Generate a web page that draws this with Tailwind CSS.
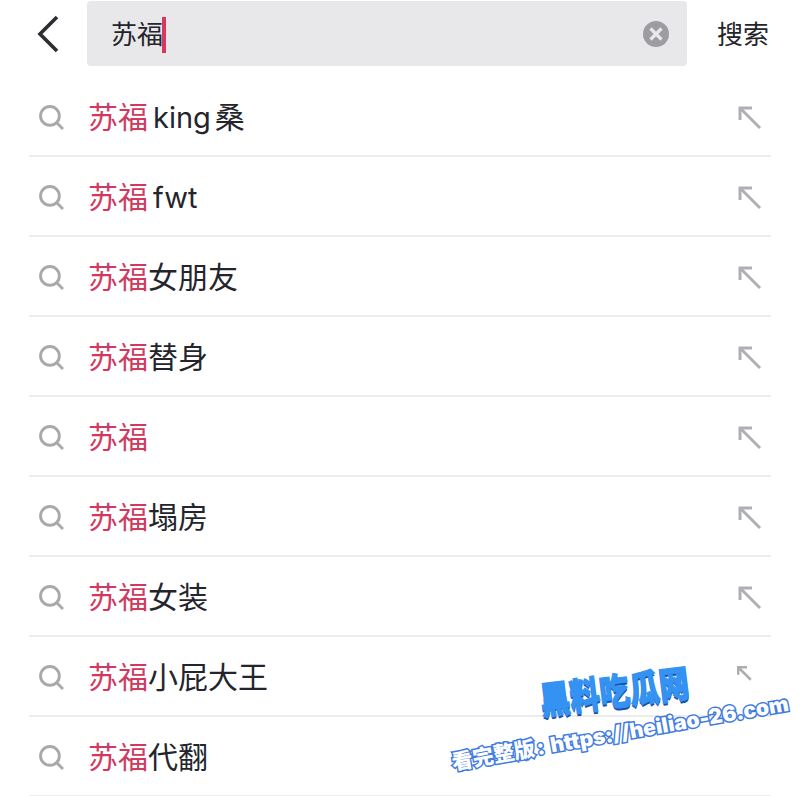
<!DOCTYPE html>
<html lang="zh-CN">
<head>
    <meta charset="UTF-8">
    <title>搜索</title>
    <script src="https://cdn.jsdelivr.net/npm/@tailwindcss/browser@4"></script>
</head>
<body class="bg-white w-[800px] h-[796px] overflow-hidden relative font-['Inter','Noto_Sans_CJK_SC',sans-serif] text-[#24252c]">

    <!-- Search header -->
    <div class="flex items-center h-[67px]">
        <div class="w-[87px] flex justify-center pl-[9px]">
            <svg width="24" height="38" viewBox="0 0 24 38" fill="none" stroke="#2c2d33" stroke-width="3.6"><path d="M21 2 L4 19 L21 36"/></svg>
        </div>
        <div class="w-[600px] h-[65px] bg-[#e8e8eb] rounded-[4px] flex items-center pl-[24px] pr-[18px]">
            <span class="text-[26px] leading-none pt-[2px]">苏福</span>
            <span class="w-[4px] h-[36px] bg-[#d8375f] mt-[3px] ml-[-1px] shrink-0"></span>
            <svg class="ml-auto mt-[1px]" width="26" height="26" viewBox="0 0 26 26"><circle cx="13" cy="13" r="13" fill="#9c9ca2"/><path d="M7.5 7.5 L18.5 18.5 M18.5 7.5 L7.5 18.5" stroke="#e8e8eb" stroke-width="3.2"/></svg>
        </div>
        <span class="ml-[30px] text-[26px] leading-none pt-[2px]">搜索</span>
    </div>

    <!-- Suggestions -->
    <div class="mx-[29px] w-[742px] mt-[10px]">
        <div class="flex items-center h-[80px] border-b-2 border-[#ececee]">
            <svg class="w-[25px] h-[25px] ml-[10px] mt-[2px]" viewBox="0 0 24 24" fill="none" stroke="#a9a9ac" stroke-width="2.8"><circle cx="10.5" cy="10.5" r="9"/><path d="M17 17 L23 23"/></svg>
            <span class="ml-[24px] text-[30px] leading-none pt-[2px]"><span class="text-[#cf3a60]">苏福</span><span class="ml-[5px] mr-[4px] text-[29px]">king</span>桑</span>
            <svg class="ml-auto mr-[9px] w-[24px] h-[24px] mt-[4px]" viewBox="0 0 24 24" fill="none" stroke="#b0b0b4" stroke-width="3"><path d="M2 14 V2 H14 M2 2 L22 22"/></svg>
        </div>
        <div class="flex items-center h-[80px] border-b-2 border-[#ececee]">
            <svg class="w-[25px] h-[25px] ml-[10px] mt-[2px]" viewBox="0 0 24 24" fill="none" stroke="#a9a9ac" stroke-width="2.8"><circle cx="10.5" cy="10.5" r="9"/><path d="M17 17 L23 23"/></svg>
            <span class="ml-[24px] text-[30px] leading-none pt-[2px]"><span class="text-[#cf3a60]">苏福</span><span class="ml-[5px] text-[29px]">fwt</span></span>
            <svg class="ml-auto mr-[9px] w-[24px] h-[24px] mt-[4px]" viewBox="0 0 24 24" fill="none" stroke="#b0b0b4" stroke-width="3"><path d="M2 14 V2 H14 M2 2 L22 22"/></svg>
        </div>
        <div class="flex items-center h-[80px] border-b-2 border-[#ececee]">
            <svg class="w-[25px] h-[25px] ml-[10px] mt-[2px]" viewBox="0 0 24 24" fill="none" stroke="#a9a9ac" stroke-width="2.8"><circle cx="10.5" cy="10.5" r="9"/><path d="M17 17 L23 23"/></svg>
            <span class="ml-[24px] text-[30px] leading-none pt-[2px]"><span class="text-[#cf3a60]">苏福</span>女朋友</span>
            <svg class="ml-auto mr-[9px] w-[24px] h-[24px] mt-[4px]" viewBox="0 0 24 24" fill="none" stroke="#b0b0b4" stroke-width="3"><path d="M2 14 V2 H14 M2 2 L22 22"/></svg>
        </div>
        <div class="flex items-center h-[80px] border-b-2 border-[#ececee]">
            <svg class="w-[25px] h-[25px] ml-[10px] mt-[2px]" viewBox="0 0 24 24" fill="none" stroke="#a9a9ac" stroke-width="2.8"><circle cx="10.5" cy="10.5" r="9"/><path d="M17 17 L23 23"/></svg>
            <span class="ml-[24px] text-[30px] leading-none pt-[2px]"><span class="text-[#cf3a60]">苏福</span>替身</span>
            <svg class="ml-auto mr-[9px] w-[24px] h-[24px] mt-[4px]" viewBox="0 0 24 24" fill="none" stroke="#b0b0b4" stroke-width="3"><path d="M2 14 V2 H14 M2 2 L22 22"/></svg>
        </div>
        <div class="flex items-center h-[80px] border-b-2 border-[#ececee]">
            <svg class="w-[25px] h-[25px] ml-[10px] mt-[2px]" viewBox="0 0 24 24" fill="none" stroke="#a9a9ac" stroke-width="2.8"><circle cx="10.5" cy="10.5" r="9"/><path d="M17 17 L23 23"/></svg>
            <span class="ml-[24px] text-[30px] leading-none pt-[2px]"><span class="text-[#cf3a60]">苏福</span></span>
            <svg class="ml-auto mr-[9px] w-[24px] h-[24px] mt-[4px]" viewBox="0 0 24 24" fill="none" stroke="#b0b0b4" stroke-width="3"><path d="M2 14 V2 H14 M2 2 L22 22"/></svg>
        </div>
        <div class="flex items-center h-[80px] border-b-2 border-[#ececee]">
            <svg class="w-[25px] h-[25px] ml-[10px] mt-[2px]" viewBox="0 0 24 24" fill="none" stroke="#a9a9ac" stroke-width="2.8"><circle cx="10.5" cy="10.5" r="9"/><path d="M17 17 L23 23"/></svg>
            <span class="ml-[24px] text-[30px] leading-none pt-[2px]"><span class="text-[#cf3a60]">苏福</span>塌房</span>
            <svg class="ml-auto mr-[9px] w-[24px] h-[24px] mt-[4px]" viewBox="0 0 24 24" fill="none" stroke="#b0b0b4" stroke-width="3"><path d="M2 14 V2 H14 M2 2 L22 22"/></svg>
        </div>
        <div class="flex items-center h-[80px] border-b-2 border-[#ececee]">
            <svg class="w-[25px] h-[25px] ml-[10px] mt-[2px]" viewBox="0 0 24 24" fill="none" stroke="#a9a9ac" stroke-width="2.8"><circle cx="10.5" cy="10.5" r="9"/><path d="M17 17 L23 23"/></svg>
            <span class="ml-[24px] text-[30px] leading-none pt-[2px]"><span class="text-[#cf3a60]">苏福</span>女装</span>
            <svg class="ml-auto mr-[9px] w-[24px] h-[24px] mt-[4px]" viewBox="0 0 24 24" fill="none" stroke="#b0b0b4" stroke-width="3"><path d="M2 14 V2 H14 M2 2 L22 22"/></svg>
        </div>
        <div class="flex items-center h-[80px] border-b-2 border-[#ececee]">
            <svg class="w-[25px] h-[25px] ml-[10px] mt-[2px]" viewBox="0 0 24 24" fill="none" stroke="#a9a9ac" stroke-width="2.8"><circle cx="10.5" cy="10.5" r="9"/><path d="M17 17 L23 23"/></svg>
            <span class="ml-[24px] text-[30px] leading-none pt-[2px]"><span class="text-[#cf3a60]">苏福</span>小屁大王</span>
            <svg class="ml-auto mr-[19px] w-[15px] h-[15px] mb-[6px]" viewBox="0 0 24 24" fill="none" stroke="#aeaeb1" stroke-width="4"><path d="M2 14 V2 H16 M2 2 L22 22"/></svg>
        </div>
        <div class="flex items-center h-[80px] border-b-2 border-[#ececee]">
            <svg class="w-[25px] h-[25px] ml-[10px] mt-[2px]" viewBox="0 0 24 24" fill="none" stroke="#a9a9ac" stroke-width="2.8"><circle cx="10.5" cy="10.5" r="9"/><path d="M17 17 L23 23"/></svg>
            <span class="ml-[24px] text-[30px] leading-none pt-[2px]"><span class="text-[#cf3a60]">苏福</span>代翻</span>
        </div>
    </div>

    <!-- Watermark -->
    <div class="absolute left-[540px] top-[686px] -rotate-[7deg] origin-left scale-y-[1.25] text-[30px] leading-none font-black text-[#3392f2] whitespace-nowrap [-webkit-text-stroke:1px_#3392f2] [text-shadow:0_2px_0_#1c4fa8]">黑料吃瓜网</div>
    <div class="absolute left-[452px] top-[752px] -rotate-[10deg] origin-left text-[21px] leading-none font-black text-white whitespace-nowrap [-webkit-text-stroke:3px_#3f7be0] [paint-order:stroke_fill]">看完整版<span class="ml-[2px] mr-[6px]">:</span>https://heiliao-26.com</div>
</body>
</html>
